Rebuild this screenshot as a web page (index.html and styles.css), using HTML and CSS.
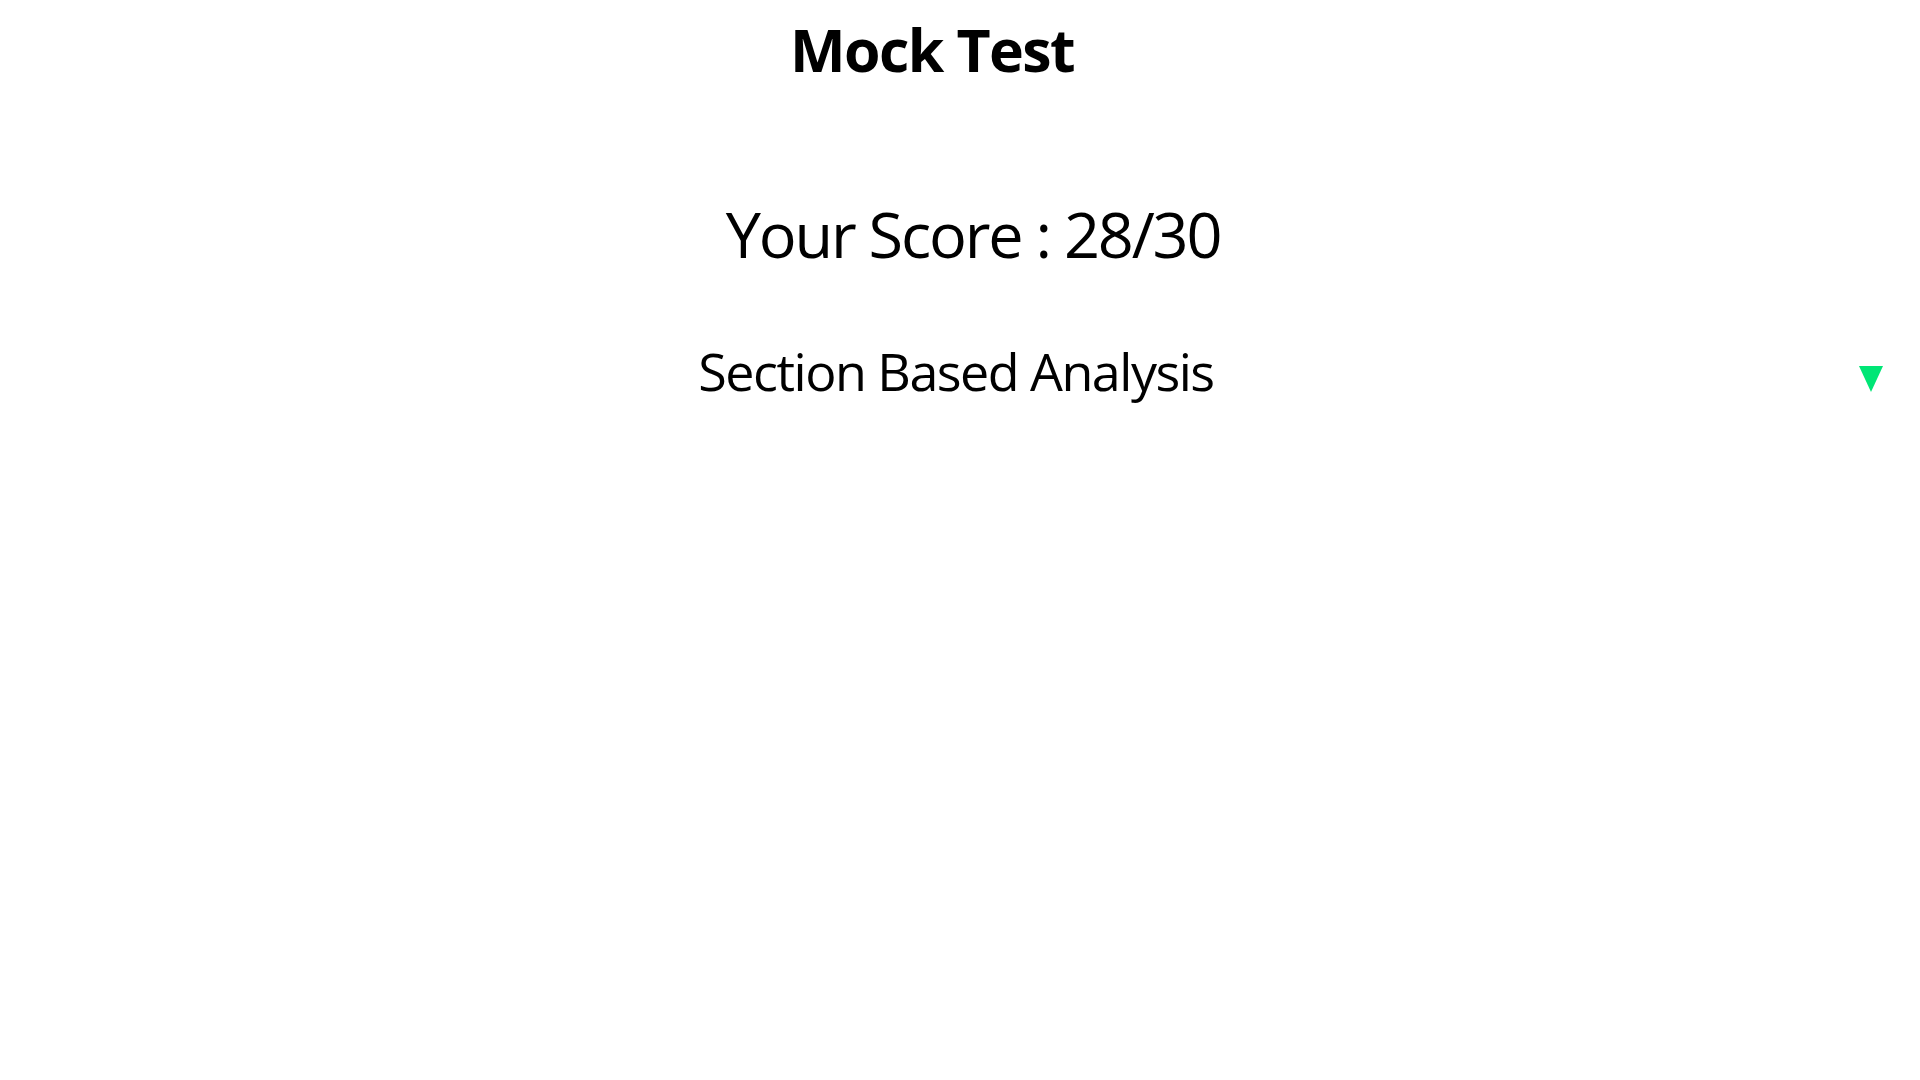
FILE: index.html
```html
<!DOCTYPE html>
<html lang="en">
<head>
<meta charset="utf-8">
<title>Mock Test</title>
<link rel="stylesheet" href="styles.css">
</head>
<body>
<main class="page">
  <h1 class="title">Mock Test</h1>
  <h2 class="score">Your Score : 28/30</h2>
  <div class="section-row">
    <h3 class="section-title">Section Based Analysis</h3>
    <span class="toggle" aria-label="expand"></span>
  </div>
</main>
</body>
</html>
```
FILE: styles.css
```css
html, body {
  margin: 0;
  padding: 0;
  background: #ffffff;
}
body {
  font-family: "Open Sans", "Noto Sans", sans-serif;
  color: #000000;
}
.page {
  display: flex;
  flex-direction: column;
}
.title {
  margin: 14px 0 0 0;
  padding-right: 56px;
  text-align: center;
  font-size: 59px;
  font-weight: 700;
  line-height: 1.2;
  letter-spacing: -1.6px;
}
.score {
  margin: 111px 0 0 0;
  padding-left: 26px;
  text-align: center;
  font-size: 63px;
  font-weight: 500;
  line-height: 1.2;
  letter-spacing: -2.2px;
}
.section-row {
  margin-top: 69px;
  display: flex;
  align-items: flex-end;
  padding-right: 37px;
}
.section-title {
  flex: 1;
  margin: 0;
  padding-left: 53px;
  text-align: center;
  font-size: 52px;
  font-weight: 500;
  line-height: 1.2;
  letter-spacing: -1.5px;
}
.toggle {
  width: 0;
  height: 0;
  border-left: 12px solid transparent;
  border-right: 12px solid transparent;
  border-top: 26px solid #00e676;
  margin-bottom: 11px;
}
```
